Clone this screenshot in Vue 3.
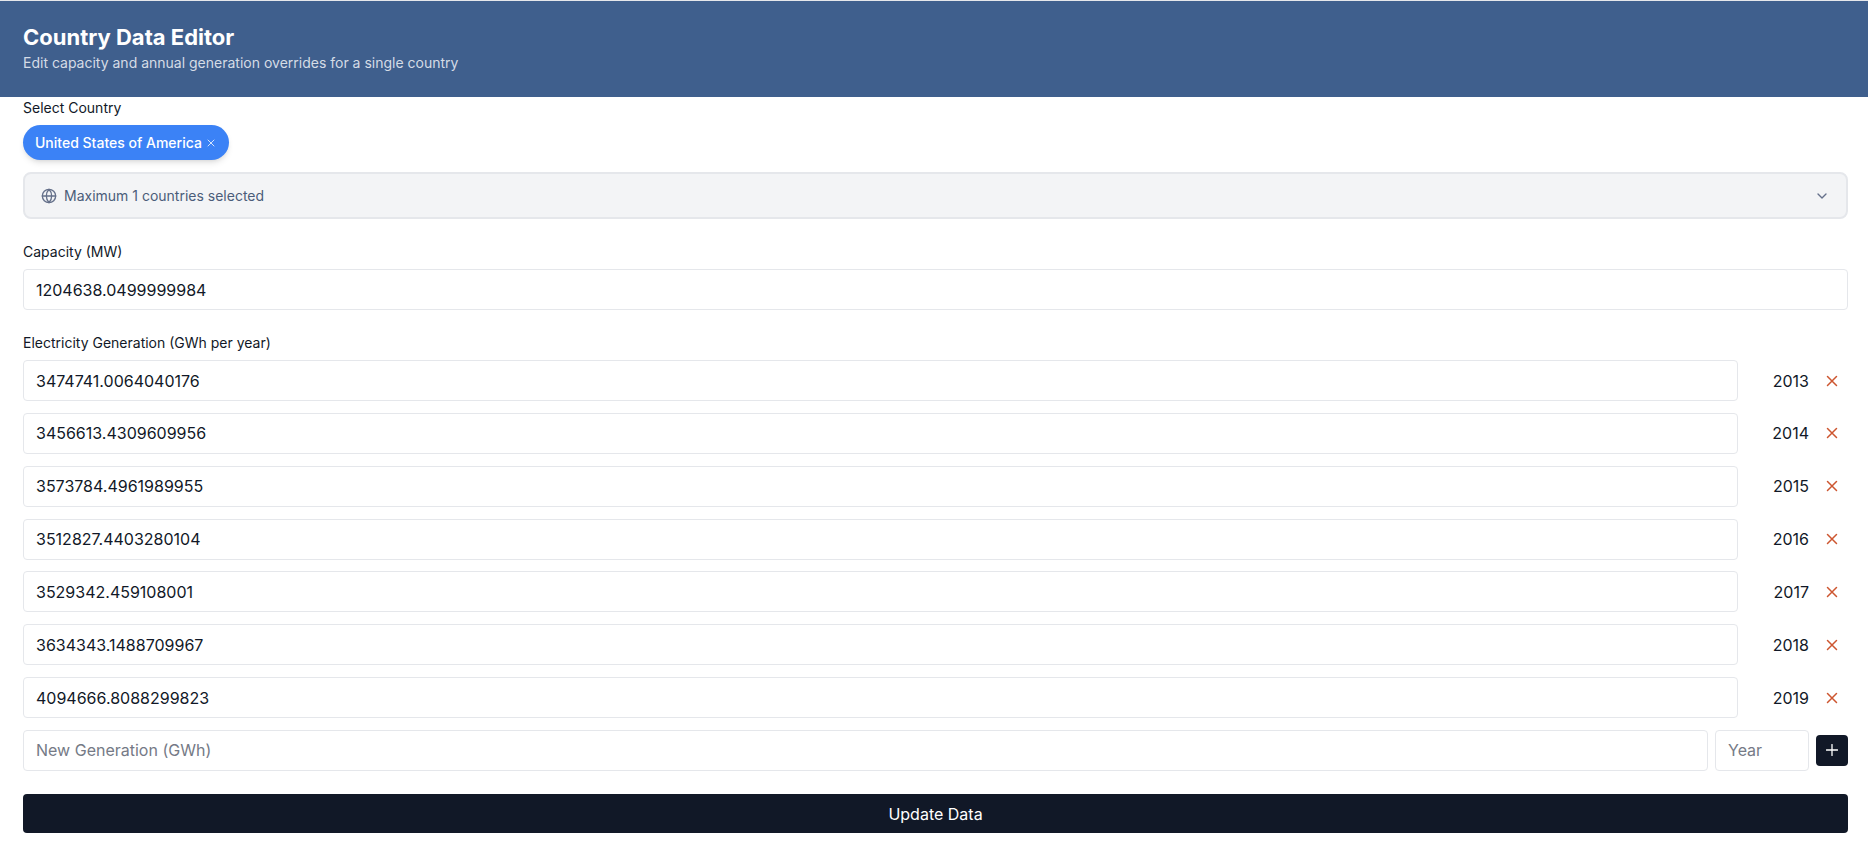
<script setup>
import { ref } from 'vue'

const country = ref('United States of America')
const capacity = ref('1204638.0499999984')
const rows = ref([
  { year: 2013, value: '3474741.0064040176' },
  { year: 2014, value: '3456613.4309609956' },
  { year: 2015, value: '3573784.4961989955' },
  { year: 2016, value: '3512827.4403280104' },
  { year: 2017, value: '3529342.459108001' },
  { year: 2018, value: '3634343.1488709967' },
  { year: 2019, value: '4094666.8088299823' },
])
const newValue = ref('')
const newYear = ref('')

function removeRow(year) {
  rows.value = rows.value.filter((r) => r.year !== year)
}

function addRow() {
  if (!newValue.value || !newYear.value) return
  rows.value.push({ year: Number(newYear.value), value: newValue.value })
  newValue.value = ''
  newYear.value = ''
}
</script>

<template>
  <main class="editor">
    <header class="header">
      <h1 class="title">Country Data Editor</h1>
      <p class="subtitle">Edit capacity and annual generation overrides for a single country</p>
    </header>

    <form class="form" @submit.prevent>
      <section class="country">
        <label class="label" for="country-select">Select Country</label>
        <div v-if="country" class="chips">
          <span class="chip">
            {{ country }}
            <button class="chip-remove" type="button" aria-label="Remove country" @click="country = ''">
              <svg viewBox="0 0 10 10" width="10" height="10"><path d="M2 2l6 6M8 2l-6 6" /></svg>
            </button>
          </span>
        </div>
        <button id="country-select" class="picker" type="button">
          <svg class="globe" viewBox="0 0 24 24" width="16" height="16">
            <circle cx="12" cy="12" r="10" />
            <path d="M12 2a14.5 14.5 0 0 0 0 20 14.5 14.5 0 0 0 0-20M2 12h20" />
          </svg>
          <span class="picker-text">Maximum 1 countries selected</span>
          <svg class="chevron" viewBox="0 0 24 24" width="16" height="16"><path d="m6 9 6 6 6-6" /></svg>
        </button>
      </section>

      <section class="field">
        <label class="label" for="capacity">Capacity (MW)</label>
        <input id="capacity" v-model="capacity" class="input" type="text" />
      </section>

      <section class="field">
        <h2 class="label">Electricity Generation (GWh per year)</h2>
        <div class="rows">
          <div v-for="row in rows" :key="row.year" class="row">
            <input :id="'gen-' + row.year" v-model="row.value" class="input" type="text" />
            <label class="year" :for="'gen-' + row.year">{{ row.year }}</label>
            <button class="remove" type="button" :aria-label="'Remove ' + row.year" @click="removeRow(row.year)">
              <svg viewBox="0 0 12 12" width="12" height="12"><path d="M1.5 1.5l9 9M10.5 1.5l-9 9" /></svg>
            </button>
          </div>
          <div class="row new-row">
            <input v-model="newValue" class="input" type="text" placeholder="New Generation (GWh)" aria-label="New Generation (GWh)" />
            <input v-model="newYear" class="input year-input" type="text" placeholder="Year" aria-label="Year" />
            <button class="add" type="button" aria-label="Add year" @click="addRow">
              <svg viewBox="0 0 12 12" width="12" height="12"><path d="M6 .5v11M.5 6h11" /></svg>
            </button>
          </div>
        </div>
      </section>

      <button class="submit" type="submit">Update Data</button>
    </form>
  </main>
</template>

<style>
body {
  margin: 0;
  background: #ffffff;
}
</style>

<style scoped>
.editor {
  border-top: 1px solid #e5e7eb;
  color: #111827;
  font-family: Inter, "Liberation Sans", sans-serif;
  font-size: 16px;
  line-height: 24px;
}

.editor *,
.editor {
  box-sizing: border-box;
}

svg {
  display: block;
  flex: none;
  fill: none;
  stroke: currentColor;
  stroke-linecap: round;
  stroke-linejoin: round;
}

button,
input {
  margin: 0;
  font: inherit;
}

button {
  border: 0;
  padding: 0;
  background: none;
  cursor: pointer;
}

.header {
  padding: 22px 23px 22px;
  background: #3f5f8d;
  color: #ffffff;
}

.title {
  margin: 0;
  font-size: 22px;
  font-weight: 700;
  line-height: 28px;
}

.subtitle {
  margin: 0;
  color: #d5dce6;
  font-size: 14px;
  line-height: 24px;
}

.form {
  display: flex;
  flex-direction: column;
  gap: 23px;
  padding: 1px 20px 20px 23px;
}

.label {
  display: block;
  margin: 0 0 8px;
  font-size: 14px;
  font-weight: 400;
  line-height: 19px;
}

.chips {
  display: flex;
  margin-bottom: 12px;
}

.chip {
  display: inline-flex;
  align-items: center;
  gap: 4px;
  height: 35px;
  padding: 0 13px 0 12px;
  border-radius: 18px;
  background: #3b82f6;
  box-shadow: 0 4px 6px -1px rgb(0 0 0 / 10%), 0 2px 4px -2px rgb(0 0 0 / 10%);
  color: #ffffff;
  font-size: 14px;
  font-weight: 500;
}

.chip-remove {
  color: #d3e3fd;
}

.picker {
  display: flex;
  align-items: center;
  gap: 7px;
  width: 100%;
  height: 47px;
  padding: 0 16px;
  border: 2px solid #e5e7eb;
  border-radius: 8px;
  background: #f3f4f6;
  color: #64708a;
  font-size: 14px;
  text-align: left;
}

.globe,
.chevron {
  stroke-width: 2;
}

.picker-text {
  flex: 1;
  color: #4b5d7a;
}

.input {
  display: block;
  flex: 1;
  width: 100%;
  min-width: 0;
  height: 41px;
  padding: 0 12px;
  border: 1px solid #e5e7eb;
  border-radius: 4px;
  outline: none;
  background: #ffffff;
  color: #111827;
}

.input::placeholder {
  color: #757a86;
  opacity: 1;
}

.rows {
  display: flex;
  flex-direction: column;
  justify-content: space-between;
  gap: 11px;
  min-height: 411px;
}

.row {
  display: flex;
  align-items: center;
}

.year {
  width: 71px;
  text-align: right;
}

.remove {
  display: flex;
  align-items: center;
  justify-content: center;
  width: 32px;
  height: 31px;
  margin-left: 7px;
  color: #cd5630;
  stroke-width: 1.5;
}

.new-row {
  gap: 7px;
}

.year-input {
  flex: none;
  width: 94px;
}

.add {
  display: flex;
  align-items: center;
  justify-content: center;
  width: 32px;
  height: 31px;
  border-radius: 4px;
  background: #111827;
  color: #ffffff;
  stroke-width: 1.3;
}

.submit {
  height: 39px;
  border-radius: 4px;
  background: #111827;
  color: #ffffff;
}
</style>
